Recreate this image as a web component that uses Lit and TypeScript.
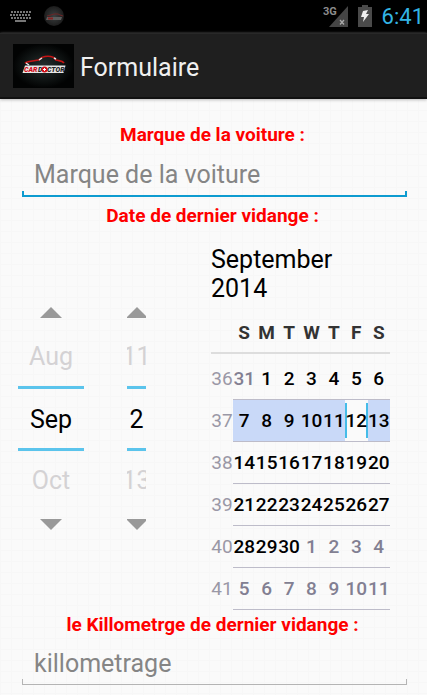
import { LitElement, html, css, svg } from "lit";
import { customElement, property } from "lit/decorators.js";
import { classMap } from "lit/directives/class-map.js";

const keyRows = [0, 1, 2].map((r) =>
  [0, 1, 2, 3, 4, 5, 6].map(
    (c) => svg`<rect x=${c * 3 - (r % 2 ? 1 : 0) + 1} y=${r * 3} width="2" height="2"/>`
  )
);

@customElement("status-bar")
class StatusBar extends LitElement {
  static styles = css`
    :host {
      display: flex;
      align-items: center;
      height: 33px;
      padding: 0 3px 0 10px;
      background: #000;
      color: #33b5e5;
      font-size: 22px;
    }
    svg { display: block; flex: none; }
    .orb { margin-left: 12px; }
    .signal { margin-left: auto; }
    .battery { margin: 0 10px 0 9px; }
    .net { font: 700 11px Roboto, sans-serif; fill: #8c8c8c; }
  `;
  render() {
    return html`
      <svg width="22" height="12" fill="#777" aria-label="Clavier">
        ${keyRows}<rect x="5" y="9" width="11" height="2" />
      </svg>
      <svg class="orb" width="20" height="22" viewBox="0 0 20 22" aria-hidden="true">
        <defs>
          <radialGradient id="g">
            <stop offset="0" stop-color="#3b3f40" />
            <stop offset="1" stop-color="#1c1c1c" />
          </radialGradient>
        </defs>
        <circle cx="10" cy="10" r="10" fill="url(#g)" />
        <path d="M3 10l4-1 3-1h4l2 1 3 1" fill="none" stroke="#6c2525" />
        <path d="M3 11h15l-1 3H2z" fill="#5c5c5c" />
        <path d="M4 12.500h5" stroke="#842424" stroke-width="2" />
      </svg>
      <svg class="signal" width="26" height="24" viewBox="0 0 26 24" aria-label="3G">
        <path d="M25 1v21H6z" fill="#454545" />
        <text class="net" x="0" y="10">3G</text>
        <path d="M17 15l4 4.500M21 15l-4 4.500" stroke="#aaa" stroke-width="1.300" />
      </svg>
      <svg class="battery" width="14" height="23" viewBox="0 0 14 23" aria-label="Batterie">
        <path d="M4 0h6v2h4v20H0V2h4z" fill="#4a4a4a" />
        <path d="M5 6l5-1-2 4h3l-6 8 1-5H3z" fill="#eee" />
      </svg>
      <span>6:41</span>
    `;
  }
}

@customElement("title-bar")
class TitleBar extends LitElement {
  static styles = css`
    :host {
      display: flex;
      align-items: center;
      gap: 6px;
      height: 66px;
      box-sizing: border-box;
      padding-left: 13px;
      background: #1f1f1f;
      border-top: 1px solid #292929;
      border-bottom: 2px solid #111;
      box-shadow: 0 1px 3px #bbb;
    }
    h1 { margin: 0; padding-top: 4px; font-size: 25px; font-weight: 400; color: #f0f0f0; }
    .word { font: italic 900 7px Roboto, sans-serif; }
  `;
  render() {
    return html`
      <svg width="61" height="44" viewBox="0 0 61 44" role="img" aria-label="Car Doctor">
        <defs>
          <radialGradient id="glow">
            <stop offset="0" stop-color="#26302f" />
            <stop offset="1" stop-color="#020303" />
          </radialGradient>
        </defs>
        <rect width="61" height="44" fill="url(#glow)" />
        <path d="M12 19c3-2 9-2 14-3 4-5 14-5 17 0 3 1 6 0 8 3" fill="none" stroke="#c51414" stroke-width="1.700" />
        <path d="M26 16l3-2M41 14l2 1M13 19l3 2" stroke="#e8e8e8" stroke-width="1.500" />
        <path d="M12 21.500h40.500l-2 7.500H9.500z" fill="#e6e6e6" />
        <text class="word" x="11" y="28" fill="#d40d16">CAR</text>
        <text class="word" x="25" y="28" fill="#252525">D</text>
        <text class="word" x="34" y="28" fill="#252525">CTOR</text>
        <circle cx="31.500" cy="25.500" r="3" fill="#d40d16" />
        <path d="M31.500 24v3M30 25.500h3" stroke="#fff" />
      </svg>
      <h1>Formulaire</h1>
    `;
  }
}

@customElement("number-spinner")
class NumberSpinner extends LitElement {
  @property() name = "";
  @property() prev = "";
  @property() value = "";
  @property() next = "";
  static styles = css`
    :host {
      display: flex;
      flex-direction: column;
      align-items: center;
      overflow: hidden;
      font-size: 25px;
    }
    button {
      flex: none;
      border: 0;
      padding: 0;
      background: none;
      font: inherit;
      color: #d4d2d4;
      height: 59px;
    }
    .arrow { height: 29px; }
    .arrow svg { display: block; }
    input {
      flex: none;
      box-sizing: border-box;
      width: 100%;
      height: 65px;
      padding: 2px 0 0;
      border: solid #5bc4ec;
      border-width: 3px 0;
      border-radius: 0;
      background: none;
      font: inherit;
      color: #000;
      text-align: center;
      outline: 0;
    }
  `;
  render() {
    return html`
      <button class="arrow" aria-label="Précédent">
        <svg width="22" height="11"><path d="M0 11L11 0l11 11z" fill="#999" /></svg>
      </button>
      <button>${this.prev}</button>
      <input aria-label=${this.name} .value=${this.value} />
      <button>${this.next}</button>
      <button class="arrow" aria-label="Suivant">
        <svg width="22" height="11"><path d="M0 0h22L11 11z" fill="#999" /></svg>
      </button>
    `;
  }
}

@customElement("month-calendar")
class MonthCalendar extends LitElement {
  static styles = css`
    :host { display: block; }
    h2 { margin: 0 0 10px; font-size: 25px; font-weight: 400; line-height: 29px; color: #000; }
    table {
      width: 100%;
      table-layout: fixed;
      border-collapse: separate;
      border-spacing: 0;
      font-size: 19px;
      line-height: 24px;
      text-align: center;
    }
    th, td { padding: 0; white-space: nowrap; }
    .week { width: 22px; font-weight: 400; color: #9a98a6; }
    thead th {
      height: 39px;
      font-weight: 700;
      color: #333;
      border-bottom: 2px solid #ddd;
    }
    .spacer td { height: 4px; line-height: 0; }
    .day { height: 41px; font-weight: 500; color: #000; border-bottom: 1px solid #bdbcc9; }
    .other { color: #827f92; }
    .current { background: #c9d9f8; }
    .today { background: #fafafa; }
    .today span {
      display: flex;
      justify-content: center;
      height: 35px;
      line-height: 35px;
      border: solid #45bce8;
      border-width: 0 2px;
    }
  `;
  render() {
    const weeks = [0, 1, 2, 3, 4, 5];
    const days = [0, 1, 2, 3, 4, 5, 6];
    return html`
      <h2>September 2014</h2>
      <table>
        <thead>
          <tr>
            <th class="week"></th>
            ${["S", "M", "T", "W", "T", "F", "S"].map((d) => html`<th scope="col">${d}</th>`)}
          </tr>
        </thead>
        <tbody>
          <tr class="spacer"><td colspan="8"></td></tr>
          ${weeks.map(
            (w) => html`<tr>
              <th class="week" scope="row">${36 + w}</th>
              ${days.map((d) => {
                const n = w * 7 + d;
                const label = n === 0 ? 31 : n > 30 ? n - 30 : n;
                const cls = {
                  day: true,
                  other: n === 0 || n > 30,
                  current: w === 1 && n !== 12,
                  today: n === 12,
                };
                return html`<td class=${classMap(cls)}><span>${label}</span></td>`;
              })}
            </tr>`
          )}
        </tbody>
      </table>
    `;
  }
}

@customElement("app-root")
class AppRoot extends LitElement {
  static styles = css`
    :host {
      display: block;
      min-height: 100vh;
      font-family: Roboto, sans-serif;
      background-color: #fafafa;
      background-image: linear-gradient(#f7f7f7 1px, transparent 1px),
        linear-gradient(90deg, #f7f7f7 1px, transparent 1px);
      background-size: 11px 11px;
    }
    form { display: flex; flex-direction: column; padding: 24px 20px 8px 22px; }
    .label {
      margin: 0;
      padding-right: 4px;
      font-size: 19px;
      font-weight: 700;
      line-height: 24px;
      text-align: center;
      color: #f00;
    }
    .field {
      --line: #b4b4b4;
      --thick: 1px;
      box-sizing: border-box;
      width: 100%;
      height: 50px;
      padding: 9px 12px 4px;
      border: 0;
      outline: 0;
      border-radius: 0;
      font: 25px Roboto, sans-serif;
      color: #000;
      background:
        linear-gradient(var(--line), var(--line)) bottom / 100% var(--thick) no-repeat,
        linear-gradient(var(--line), var(--line)) left bottom / var(--thick) 6px no-repeat,
        linear-gradient(var(--line), var(--line)) right bottom / var(--thick) 6px no-repeat;
    }
    .active { --line: #0d9bd0; --thick: 2px; margin-bottom: 7px; }
    .lower { height: 48px; padding-top: 8px; }
    .field::placeholder { color: #858585; opacity: 1; }
    .picker { display: flex; align-items: flex-start; margin: 17px 0 3px -4px; }
    .month, .date { margin-top: 53px; }
    .month { width: 66px; margin-right: 43px; }
    .date { width: 19px; margin-right: 65px; }
    .calendar { width: 179px; }
  `;
  render() {
    return html`
      <status-bar></status-bar>
      <title-bar></title-bar>
      <form>
        <label class="label" for="brand">Marque de la voiture :</label>
        <input class="field active" id="brand" placeholder="Marque de la voiture" />
        <p class="label">Date de dernier vidange :</p>
        <div class="picker">
          <number-spinner class="month" name="Mois" prev="Aug" value="Sep" next="Oct"></number-spinner>
          <number-spinner class="date" name="Jour" prev="11" value="2" next="13"></number-spinner>
          <month-calendar class="calendar"></month-calendar>
        </div>
        <label class="label" for="distance">le Killometrge de dernier vidange :</label>
        <input class="field lower" id="distance" placeholder="killometrage" />
      </form>
    `;
  }
}
